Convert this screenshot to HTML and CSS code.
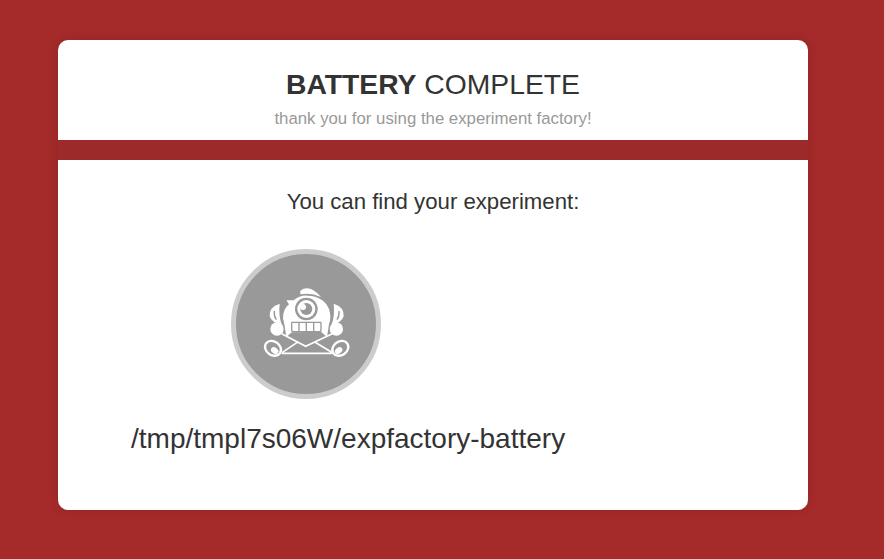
FILE: index.html
```html
<!DOCTYPE html>
<html>
<head>
    <title>Battery Complete</title>
    <link rel="stylesheet" href="styles.css">
</head>
<body>
    <div class="card">
        <div class="card-header">
            <h1><b>BATTERY</b> COMPLETE</h1>
            <p>thank you for using the experiment factory!</p>
        </div>
        <div class="band"></div>
        <div class="card-body">
            <p class="find">You can find your experiment:</p>
            <div class="logo-circle">
                <svg class="monster" viewBox="-12 -3 270 240" width="90" height="80">
                    <!-- hair -->
                    <path class="w" d="M106 17 Q134 -4 168 36 Q138 22 106 28Z"/>
                    <!-- horns -->
                    <path class="w" d="M44 56 Q12 66 14 94 Q20 114 50 118 Q40 90 44 56Z"/>
                    <path class="gl" d="M28 78 Q26 92 34 104"/>
                    <path class="w" d="M206 56 Q238 66 236 94 Q230 114 200 118 Q210 90 206 56Z"/>
                    <path class="gl" d="M222 78 Q224 92 216 104"/>
                    <!-- head -->
                    <path class="w" d="M54 100 Q54 72 72 58 L64 46 L86 46 Q104 30 128 32 Q176 34 192 72 Q200 96 192 118 L186 156 L168 140 L80 142 L64 156 L58 118Z"/>
                    <!-- eye -->
                    <circle class="g" cx="124" cy="72" r="34"/>
                    <circle class="w" cx="124" cy="72" r="27"/>
                    <circle class="g" cx="124" cy="72" r="18"/>
                    <circle class="w" cx="114" cy="66" r="9"/>
                    <!-- teeth -->
                    <path class="gl" d="M80 112 H168 M80 112 V134 Q80 140 86 140 H162 Q168 140 168 134 V112 M102 112 V140 M124 112 V140 M146 112 V140"/>
                    <!-- mouth below the teeth -->
                    <path class="g" d="M72 158 L86 144 H164 L178 158 L122 176Z"/>
                    <!-- arms -->
                    <circle class="w" cx="36" cy="132" r="20"/>
                    <circle class="w" cx="214" cy="132" r="20"/>
                    <!-- envelope -->
                    <path class="wl" d="M50 146 L122 184 L202 146 M50 205 H202 M52 202 L100 170 M200 202 L148 170"/>
                    <!-- feet -->
                    <ellipse class="w" cx="24" cy="190" rx="29" ry="24" transform="rotate(35 24 190)"/>
                    <ellipse class="g" cx="24" cy="190" rx="22" ry="17" transform="rotate(35 24 190)"/>
                    <ellipse class="w" cx="29" cy="197" rx="12" ry="9" transform="rotate(35 29 197)"/>
                    <ellipse class="w" cx="226" cy="190" rx="29" ry="24" transform="rotate(-35 226 190)"/>
                    <ellipse class="g" cx="226" cy="190" rx="22" ry="17" transform="rotate(-35 226 190)"/>
                    <ellipse class="w" cx="221" cy="197" rx="12" ry="9" transform="rotate(-35 221 197)"/>
                </svg>
            </div>
            <p class="path">/tmp/tmpl7s06W/expfactory-battery</p>
        </div>
    </div>
</body>
</html>
```

FILE: styles.css
```css
body {
    margin: 0;
    padding: 40px 0 49px 58px;
    background-color: #a52a2a;
    font-family: "Liberation Sans", Arial, sans-serif;
    color: #333;
}

.card {
    width: 750px;
    height: 470px;
    background-color: white;
    border-radius: 10px;
    box-shadow: 0 0 10px rgba(0, 0, 0, 0.12);
    overflow: hidden;
}

.card-header {
    height: 100px;
    text-align: center;
}

.card-header h1 {
    margin: 0;
    padding-top: 29px;
    font-size: 28.3px;
    line-height: 30px;
    font-weight: normal;
}

.card-header p {
    margin: 0;
    padding-top: 10px;
    font-size: 16.8px;
    line-height: 20px;
    color: #999;
}

.band {
    height: 20px;
    background-color: #9c2a2a;
}

.card-body {
    padding: 0 0 0 73px;
}

.find {
    margin: 0;
    padding: 30px 73px 0 0;
    font-size: 22.2px;
    line-height: 24px;
    text-align: center;
}

.logo-circle {
    box-sizing: border-box;
    display: flex;
    align-items: center;
    justify-content: center;
    width: 150px;
    height: 150px;
    margin: 35px 0 0 100px;
    border: 5px solid #ccc;
    border-radius: 50%;
    background-color: #999;
}

.path {
    margin: 0;
    padding-top: 25px;
    font-size: 28px;
    line-height: 30px;
}

.w { fill: white; }
.g { fill: #999; }
.gl { fill: none; stroke: #999; stroke-width: 4; }
.wl { fill: none; stroke: white; stroke-width: 5; }
```
